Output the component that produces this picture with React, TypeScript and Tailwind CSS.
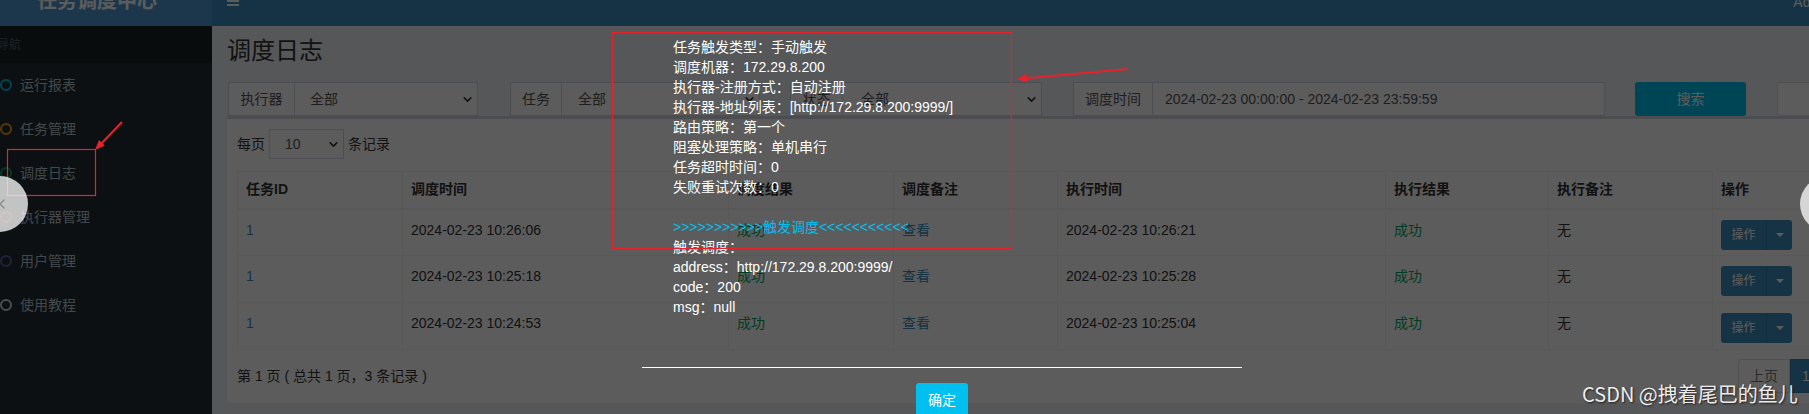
import { ChevronDown, ChevronLeft } from "lucide-react";

const FONT = "font-['Liberation_Sans','Noto_Sans_CJK_SC',sans-serif]";

const menu = [
  { label: "运行报表", ring: "border-[#00c0ef]" },
  { label: "任务管理", ring: "border-[#f39c12]" },
  { label: "调度日志", ring: "border-[#00a65a]" },
  { label: "执行器管理", ring: "border-[#dd4b39]" },
  { label: "用户管理", ring: "border-[#605ca8]" },
  { label: "使用教程", ring: "border-[#d2d6de]" },
];

const rows = [
  { time: "2024-02-23 10:26:06", exec: "2024-02-23 10:26:21" },
  { time: "2024-02-23 10:25:18", exec: "2024-02-23 10:25:28" },
  { time: "2024-02-23 10:24:53", exec: "2024-02-23 10:25:04" },
];

const triggerLines = [
  "任务触发类型：手动触发",
  "调度机器：172.29.8.200",
  "执行器-注册方式：自动注册",
  "执行器-地址列表：[http://172.29.8.200:9999/]",
  "路由策略：第一个",
  "阻塞处理策略：单机串行",
  "任务超时时间：0",
  "失败重试次数：0",
];

function Sidebar() {
  return (
    <aside className="w-[212px] shrink-0 flex flex-col bg-[#222d32]">
      <div className="h-[26px] overflow-hidden bg-[#4f9ad0]">
        <div className="h-[50px] -mt-[24px] pl-[37px] flex items-center text-[20px] font-bold text-white">
          任务调度中心
        </div>
      </div>
      <div className="h-[37px] bg-[#1a2226] flex items-center -ml-[3px] text-[12px] text-[#4b646f]">导航</div>
      <ul>
        {menu.map((m) => (
          <li key={m.label} className="h-[44px] flex items-center text-[#b8c7ce]">
            <span className={`w-[12px] h-[12px] rounded-full border-2 ${m.ring}`} />
            <span className="ml-[8px]">{m.label}</span>
          </li>
        ))}
      </ul>
    </aside>
  );
}

function Select({ value, className }: { value: string; className: string }) {
  return (
    <div className={`shrink-0 h-full flex items-center justify-between bg-white border border-[#d2d6de] text-[#555] pr-[3px] ${className}`}>
      <span>{value}</span>
      <ChevronDown size={13} strokeWidth={3} className="text-[#333]" />
    </div>
  );
}

function Addon({ label, className }: { label: string; className: string }) {
  return (
    <div className={`shrink-0 h-full flex items-center justify-center bg-white border border-[#d2d6de] text-[#555] ${className}`}>
      {label}
    </div>
  );
}

function OpButton() {
  return (
    <div className="inline-flex h-[30px] rounded-[3px] bg-[#3c8dbc] text-white text-[12px]">
      <span className="w-[45px] flex items-center justify-center">操作</span>
      <span className="w-[26px] flex items-center justify-center border-l border-[#367fa9]">
        <span className="border-x-[4px] border-t-[4px] border-x-transparent border-t-white" />
      </span>
    </div>
  );
}

function LogTable() {
  const th = "border border-[#f4f4f4] border-b-2 px-[8px] text-left font-bold text-[#333]";
  const td = "border border-[#f4f4f4] px-[8px] pt-[10px] align-top leading-[20px]";
  return (
    <table className="table-fixed border-collapse w-[1585px] mt-[12px]">
      <colgroup>
        <col className="w-[165px]" />
        <col className="w-[326px]" />
        <col className="w-[165px]" />
        <col className="w-[164px]" />
        <col className="w-[328px]" />
        <col className="w-[163px]" />
        <col className="w-[164px]" />
        <col className="w-[110px]" />
      </colgroup>
      <thead>
        <tr className="h-[37px]">
          <th className={th}>任务ID</th>
          <th className={th}>调度时间</th>
          <th className={th}>调度结果</th>
          <th className={th}>调度备注</th>
          <th className={th}>执行时间</th>
          <th className={th}>执行结果</th>
          <th className={th}>执行备注</th>
          <th className={th}>操作</th>
        </tr>
      </thead>
      <tbody>
        {rows.map((r) => (
          <tr key={r.time} className="h-[47px] text-[#333]">
            <td className={`${td} text-[#3c8dbc]`}>1</td>
            <td className={td}>{r.time}</td>
            <td className={`${td} text-[#00a65a]`}>成功</td>
            <td className={`${td} text-[#3c8dbc]`}>查看</td>
            <td className={td}>{r.exec}</td>
            <td className={`${td} text-[#00a65a]`}>成功</td>
            <td className={td}>无</td>
            <td className={td}>
              <OpButton />
            </td>
          </tr>
        ))}
      </tbody>
    </table>
  );
}

function Main() {
  return (
    <div className="flex-1 min-w-0 flex flex-col">
      <header className="h-[26px] shrink-0 overflow-hidden bg-[#3c8dbc] flex">
        <div className="ml-[15px] -mt-[4px] flex flex-col gap-[2px]">
          <span className="w-[12px] h-[2px] bg-white" />
          <span className="w-[12px] h-[2px] bg-white" />
          <span className="w-[12px] h-[2px] bg-white" />
        </div>
        <span className="ml-auto -mr-[24px] -mt-[8px] text-[14px] text-white">Admin</span>
      </header>
      <div className="flex-1 bg-[#ecf0f5] pl-[15px] pt-[12px]">
        <h1 className="text-[24px] leading-[26px] text-[#333]">调度日志</h1>

        {/* filters */}
        <div className="mt-[18px] h-[34px] flex">
          <div className="ml-[1px] h-full flex shrink-0">
            <Addon label="执行器" className="w-[67px]" />
            <Select value="全部" className="w-[183px] pl-[15px] border-l-0" />
          </div>
          <div className="ml-[32px] h-full flex shrink-0">
            <Addon label="任务" className="w-[52px]" />
            <Select value="全部" className="w-[198px] pl-[16px] border-l-0" />
          </div>
          <div className="ml-[30px] h-full flex shrink-0">
            <Addon label="状态" className="w-[53px]" />
            <Select value="全部" className="w-[199px] pl-[18px] border-l-0" />
          </div>
          <div className="ml-[31px] h-full flex shrink-0">
            <Addon label="调度时间" className="w-[80px]" />
            <div className="w-[452px] h-full flex items-center pl-[12px] bg-white border border-l-0 border-[#d2d6de] text-[#555]">
              2024-02-23 00:00:00 - 2024-02-23 23:59:59
            </div>
          </div>
          <div className="ml-[30px] w-[111px] shrink-0 h-full rounded-[3px] bg-[#00c0ef] text-white flex items-center justify-center">
            搜索
          </div>
          <div className="ml-[31px] w-[80px] shrink-0 h-full rounded-[3px] bg-white border border-[#ddd]" />
        </div>

        {/* box */}
        <div className="w-[1605px] border-t-[3px] border-[#d2d6de] bg-white p-[10px] rounded-b-[3px]">
          <div className="h-[30px] flex items-center text-[#333]">
            <span>每页</span>
            <Select value="10" className="ml-[4px] w-[75px] pl-[15px]" />
            <span className="ml-[4px]">条记录</span>
          </div>
          <LogTable />
          <div className="mt-[9px] h-[34px] flex items-center justify-between text-[#333]">
            <span>第 1 页 ( 总共 1 页，3 条记录 )</span>
            <div className="flex h-full">
              <span className="w-[52px] flex items-center justify-center bg-white border border-[#ddd] rounded-l-[3px] text-[#777]">上页</span>
              <span className="w-[32px] flex items-center justify-center bg-[#3c8dbc] border border-[#367fa9] text-white">1</span>
            </div>
          </div>
        </div>
      </div>
    </div>
  );
}

function Dialog() {
  return (
    <div className="absolute left-[642px] top-[37px] w-[600px] text-white">
      <div className="pl-[31px] text-[14px] leading-[20px]">
        {triggerLines.map((l) => (
          <div key={l}>{l}</div>
        ))}
        <div className="h-[20px]" />
        <div className="text-[#00c0ef]">&gt;&gt;&gt;&gt;&gt;&gt;&gt;&gt;&gt;&gt;&gt;触发调度&lt;&lt;&lt;&lt;&lt;&lt;&lt;&lt;&lt;&lt;&lt;</div>
        <div>触发调度：</div>
        <div>address：http://172.29.8.200:9999/</div>
        <div>code：200</div>
        <div>msg：null</div>
      </div>
      <div className="mt-[50px] border-t border-white pt-[15px] flex justify-center">
        <div className="h-[34px] px-[12px] rounded-[3px] bg-[#00c0ef] text-white flex items-center">确定</div>
      </div>
    </div>
  );
}

function Annotations() {
  return (
    <>
      <svg className="absolute inset-0 pointer-events-none" width="1809" height="414" viewBox="0 0 1809 414">
        <rect x="7.5" y="149.5" width="88" height="46" fill="none" stroke="#e8222c" strokeWidth="1.2" />
        <rect x="612.5" y="32.5" width="399" height="216" fill="none" stroke="#e8222c" strokeWidth="1.2" />
        <line x1="122" y1="122" x2="100" y2="145" stroke="#e8222c" strokeWidth="2" />
        <polygon points="95,150 104.8,145.6 99,140" fill="#e8222c" />
        <line x1="1128" y1="69" x2="1024" y2="78.4" stroke="#e8222c" strokeWidth="2" />
        <polygon points="1017,79 1027.3,82.6 1026.6,73.6" fill="#e8222c" />
      </svg>
      <div className="absolute left-[-28px] top-[176px] w-[56px] h-[56px] rounded-full bg-white/75 flex items-center justify-end pr-[18px] text-[#8a8a8a]">
        <ChevronLeft size={16} strokeWidth={2} />
      </div>
      <div className="absolute left-[1800px] top-[176px] w-[56px] h-[56px] rounded-full bg-white/75" />
      <div className="absolute left-[1582px] top-[380px] text-[20px] leading-[28px] text-[#ececec] font-['Noto_Sans_CJK_SC',sans-serif] [text-shadow:1px_1px_2px_rgba(0,0,0,0.7)] whitespace-nowrap">
        CSDN @拽着尾巴的鱼儿
      </div>
    </>
  );
}

export default function App() {
  return (
    <div className={`relative w-[1809px] h-[414px] overflow-hidden flex text-[14px] ${FONT}`}>
      <Sidebar />
      <Main />
      <div className="absolute inset-0 bg-black/[0.64]" />
      <Dialog />
      <Annotations />
    </div>
  );
}
